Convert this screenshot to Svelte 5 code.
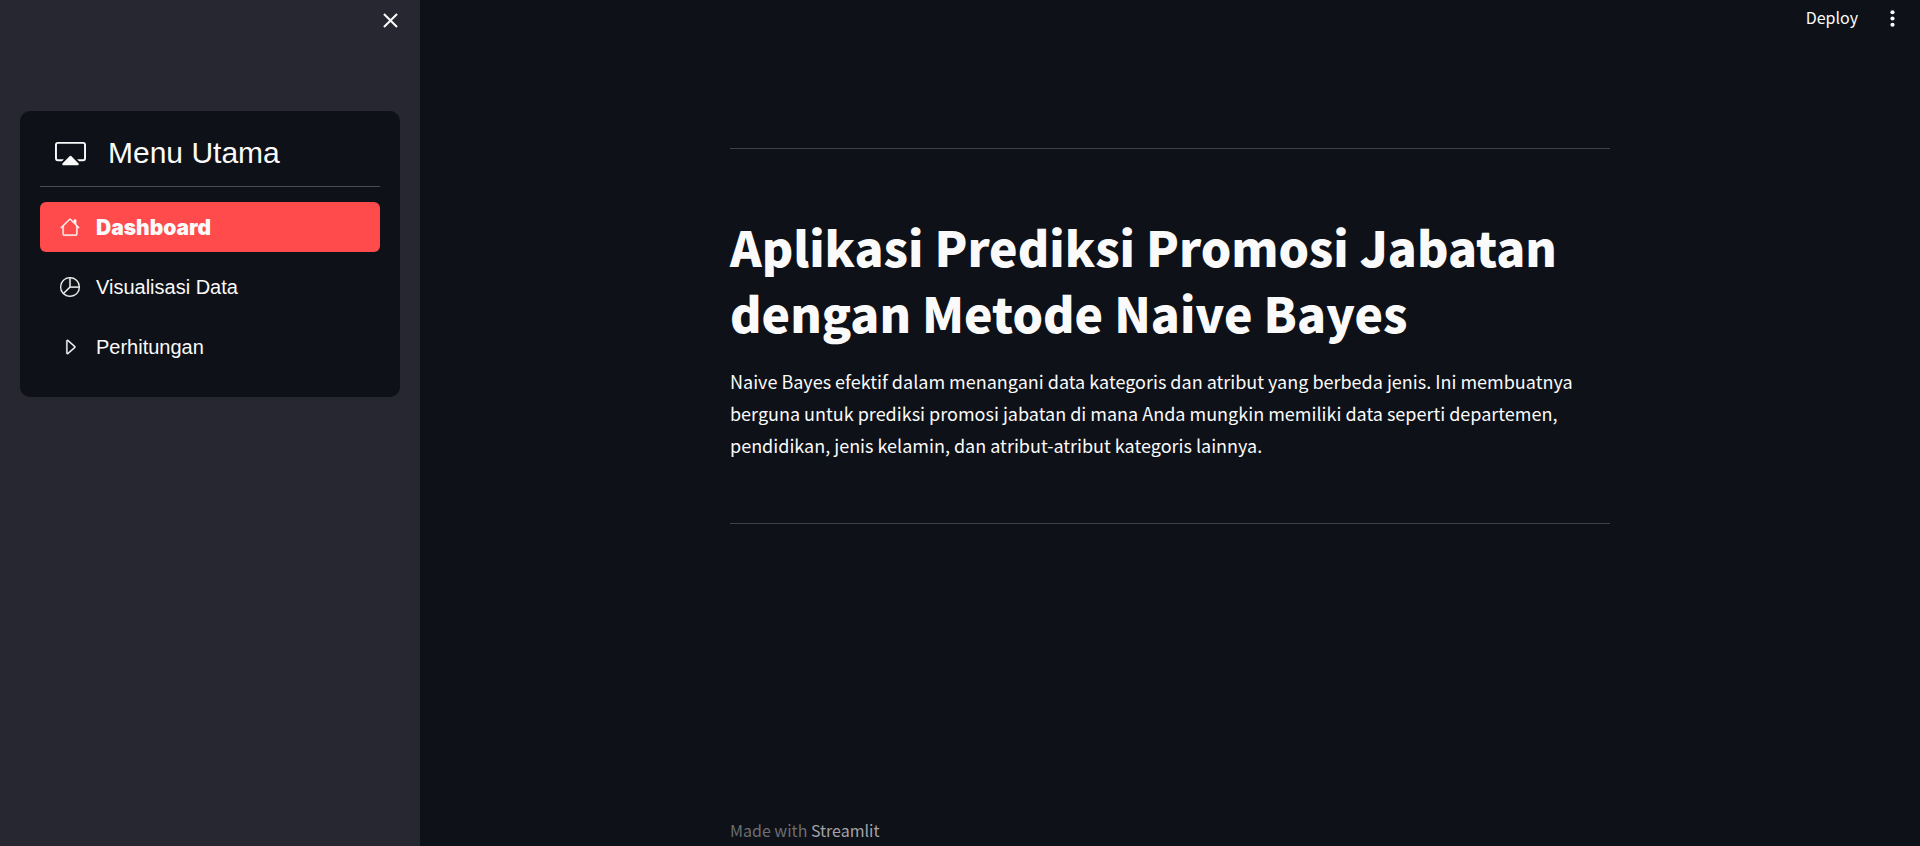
<script>
  const items = [
    {
      label: 'Dashboard',
      paths: [
        'M2 13.5V7h1v6.5a.5.5 0 0 0 .5.5h9a.5.5 0 0 0 .5-.5V7h1v6.5a1.5 1.5 0 0 1-1.5 1.5h-9A1.5 1.5 0 0 1 2 13.5zm11-11V6l-2-2V2.5a.5.5 0 0 1 .5-.5h1a.5.5 0 0 1 .5.5z',
        'M7.293 1.5a1 1 0 0 1 1.414 0l6.647 6.646a.5.5 0 0 1-.708.708L8 2.207 1.354 8.854a.5.5 0 1 1-.708-.708L7.293 1.5z'
      ]
    },
    {
      label: 'Visualisasi Data',
      paths: [
        'M7.5 1.018a7 7 0 0 0-4.79 11.566L7.5 7.793V1.018zm1 0V7.5h6.482A7.001 7.001 0 0 0 8.5 1.018zM14.982 8.5H8.207l-4.79 4.79A7 7 0 0 0 14.982 8.5zM0 8a8 8 0 1 1 16 0A8 8 0 0 1 0 8z'
      ]
    },
    {
      label: 'Perhitungan',
      paths: [
        'M6 12.796V3.204L11.481 8 6 12.796zm.659.753 5.48-4.796a1 1 0 0 0 0-1.506L6.66 2.451C6.011 1.885 5 2.345 5 3.204v9.592a1 1 0 0 0 1.659.753z'
      ]
    }
  ];
  let active = $state('Dashboard');
</script>

<div class="app">
  <aside>
    <div class="sidebar-top">
      <button class="icon-button" aria-label="Close sidebar">
        <svg width="25" height="25" viewBox="0 0 24 24" fill="currentColor" aria-hidden="true">
          <path d="M19 6.41L17.59 5 12 10.59 6.41 5 5 6.41 10.59 12 5 17.59 6.41 19 12 13.41 17.59 19 19 17.59 13.41 12z" />
        </svg>
      </button>
    </div>
    <nav>
      <div class="menu-title">
        <svg width="31" height="31" viewBox="0 0 16 16" fill="currentColor" aria-hidden="true">
          <path d="m7.646 9.354-3.792 3.792a.5.5 0 0 0 .353.854h7.586a.5.5 0 0 0 .354-.854L8.354 9.354a.5.5 0 0 0-.708 0z" />
          <path d="M11.414 11H14.5a.5.5 0 0 0 .5-.5v-7a.5.5 0 0 0-.5-.5h-13a.5.5 0 0 0-.5.5v7a.5.5 0 0 0 .5.5h3.086l-1 1H1.5A1.5 1.5 0 0 1 0 10.5v-7A1.5 1.5 0 0 1 1.5 2h13A1.5 1.5 0 0 1 16 3.5v7a1.5 1.5 0 0 1-1.5 1.5h-2.086l-1-1z" />
        </svg>
        <span>Menu Utama</span>
      </div>
      <ul>
        {#each items as item}
          <li>
            <button class="menu-item" class:active={active === item.label} onclick={() => (active = item.label)}>
              <svg width="20" height="20" viewBox="0 0 16 16" fill="currentColor" aria-hidden="true">
                {#each item.paths as d}
                  <path fill-rule="evenodd" {d} />
                {/each}
              </svg>
              <span>{item.label}</span>
            </button>
          </li>
        {/each}
      </ul>
    </nav>
  </aside>

  <div class="page">
    <header>
      <button class="deploy">Deploy</button>
      <button class="icon-button" aria-label="Main menu">
        <svg width="25" height="25" viewBox="0 0 24 24" fill="currentColor" aria-hidden="true">
          <circle cx="12" cy="6" r="2" />
          <circle cx="12" cy="12" r="2" />
          <circle cx="12" cy="18" r="2" />
        </svg>
      </button>
    </header>
    <main>
      <hr />
      <h1>Aplikasi Prediksi Promosi Jabatan dengan Metode Naive Bayes</h1>
      <p>
        Naive Bayes efektif dalam menangani data kategoris dan atribut yang berbeda jenis. Ini membuatnya
        berguna untuk prediksi promosi jabatan di mana Anda mungkin memiliki data seperti departemen,
        pendidikan, jenis kelamin, dan atribut-atribut kategoris lainnya.
      </p>
      <hr />
    </main>
    <footer>Made with <a href="#streamlit">Streamlit</a></footer>
  </div>
</div>

<style>
  :global(body) {
    background: #0e1117;
  }

  .app {
    display: flex;
    min-height: 100vh;
    color: #fafafa;
    font-family: 'Noto Sans CJK SC', 'Noto Sans', sans-serif;
  }

  button {
    border: 0;
    padding: 0;
    background: none;
    color: inherit;
    font: inherit;
    cursor: pointer;
  }

  svg {
    display: block;
    flex: none;
  }

  aside {
    box-sizing: border-box;
    flex: none;
    width: 420px;
    padding: 0 20px;
    background: #262730;
  }

  .sidebar-top {
    display: flex;
    justify-content: flex-end;
    align-items: flex-start;
    height: 103px;
    padding-top: 8px;
    margin-right: -3px;
  }

  nav {
    padding: 20px;
    border-radius: 10px;
    background: #0e1117;
    font-family: 'Liberation Sans', Arial, sans-serif;
  }

  .menu-title {
    display: flex;
    align-items: center;
    gap: 22px;
    padding: 0 15px 11px;
    border-bottom: 1px solid #4a4c51;
    font-size: 30px;
    line-height: 44px;
  }

  .menu-item path {
    stroke: currentColor;
    stroke-width: 0.2;
  }

  ul {
    display: flex;
    flex-direction: column;
    gap: 10px;
    margin: 0;
    padding: 15px 0 5px;
    list-style: none;
  }

  .menu-item {
    display: flex;
    align-items: center;
    gap: 16px;
    width: 100%;
    padding: 10px 20px;
    border-radius: 6px;
    font-size: 20px;
    line-height: 30px;
    text-align: left;
  }

  .menu-item.active {
    background: #ff4b4b;
  }

  .menu-item.active span {
    padding-top: 2px;
    font-family: 'Arial Black', Inter, sans-serif;
    font-size: 21px;
    font-weight: 900;
    line-height: 28px;
  }

  .page {
    display: flex;
    flex: 1;
    flex-direction: column;
    min-width: 0;
  }

  header {
    display: flex;
    justify-content: flex-end;
    align-items: flex-start;
    gap: 22px;
    padding: 6px 15px;
  }

  .deploy {
    font-size: 16px;
    line-height: 22px;
  }

  main,
  footer {
    box-sizing: border-box;
    width: 100%;
    max-width: 920px;
    margin: 0 auto;
    padding: 0 20px;
  }

  main {
    flex: 1;
    padding-top: 111px;
  }

  hr {
    height: 1px;
    margin: 0;
    border: 0;
    background: #3e4043;
  }

  h1 {
    margin: 64px 0 20px;
    font-size: 48px;
    font-weight: 900;
    line-height: 66px;
  }

  p {
    margin: 0 0 62px;
    font-size: 18px;
    line-height: 32px;
  }

  footer {
    padding-bottom: 3px;
    color: #6c6e72;
    font-size: 16px;
    line-height: 26px;
  }

  footer a {
    color: #a3a4a7;
    text-decoration: none;
  }
</style>
